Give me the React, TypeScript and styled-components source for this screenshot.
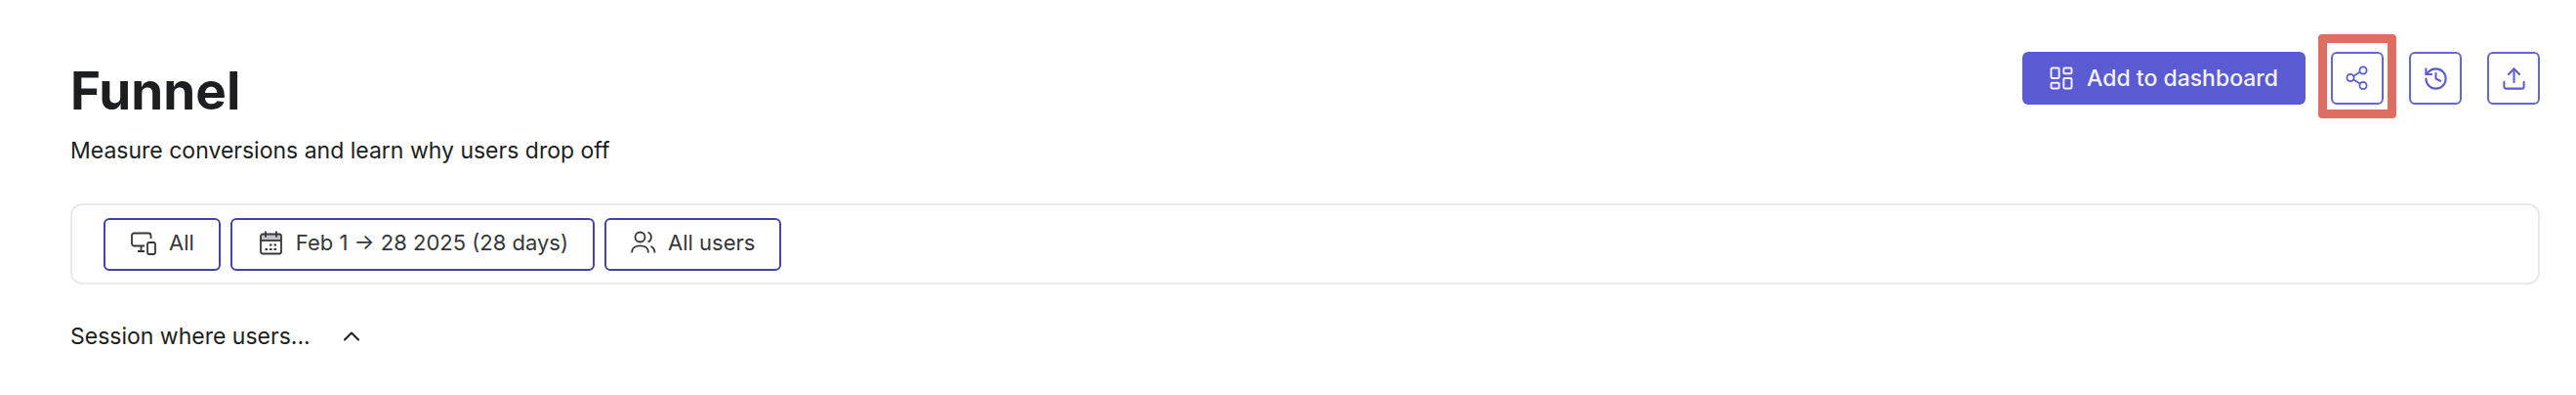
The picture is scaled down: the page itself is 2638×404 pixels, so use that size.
import React from "react";
import styled, { createGlobalStyle } from "styled-components";
import { ChevronUp, History, LayoutDashboard, Upload } from "lucide-react";

const Global = createGlobalStyle`
  *, *::before, *::after { box-sizing: border-box; }
  body {
    margin: 0;
    background: #ffffff;
    color: #1d1e20;
    font-family: Inter, "Liberation Sans", sans-serif;
    font-size: 23px;
    line-height: 32px;
  }
  button { font: inherit; cursor: pointer; white-space: nowrap; }
  svg { display: block; flex: none; }
`;

const Page = styled.main`
  padding: 53px 37px 44px 72px;
`;

const Header = styled.header`
  display: flex;
  align-items: flex-start;
  justify-content: space-between;
  gap: 32px;
`;

const Heading = styled.div`
  padding-top: 7px;
`;

const Title = styled.h1`
  margin: 0;
  font-size: 53px;
  line-height: 66px;
  font-weight: 700;
`;

const Subtitle = styled.p`
  margin: 12px 0 0;
`;

const Actions = styled.div`
  display: flex;
  align-items: center;
  gap: 26px;
`;

const PrimaryButton = styled.button`
  display: flex;
  align-items: center;
  gap: 12px;
  height: 54px;
  padding: 0 28px 0 26px;
  border: 0;
  border-radius: 6px;
  background: #5a5ad2;
  color: #f3f3fc;
  font-weight: 500;
`;

const IconButton = styled.button`
  display: grid;
  place-items: center;
  width: 54px;
  height: 54px;
  padding: 0;
  border: 2px solid #6666d5;
  border-radius: 6px;
  background: #ffffff;
  color: #5a5ad2;
`;

const Highlighted = styled.div`
  position: relative;

  &::after {
    content: "";
    position: absolute;
    inset: -18px -13px -14px;
    border: 9px solid #de6e62;
    border-radius: 4px;
    pointer-events: none;
  }
`;

const FilterBar = styled.section`
  display: flex;
  gap: 10px;
  margin-top: 38px;
  padding: 13px 32px 12px;
  border: 2px solid #e9eaea;
  border-radius: 12px;
`;

const FilterButton = styled.button`
  display: flex;
  align-items: center;
  gap: 12px;
  height: 54px;
  padding: 0 25px 4px;
  border: 2px solid #4343a9;
  border-radius: 6px;
  background: #ffffff;
  color: #36373a;
  font-size: 22px;

  svg { margin-top: 2px; }
`;

const SectionToggle = styled.button`
  display: flex;
  align-items: center;
  gap: 28px;
  margin-top: 37px;
  padding: 0;
  border: 0;
  background: none;
  color: inherit;
`;

const Glyph = styled.svg.attrs({ fill: "none", stroke: "currentColor", "aria-hidden": true })`
  stroke-width: 1.8px;
  stroke-linejoin: round;
`;

const DevicesIcon = () => (
  <Glyph width="28" height="26" viewBox="0 0 28 26">
    <path d="M21.500 8V5a2.500 2.500 0 0 0-2.500-2.500H4.500A2.500 2.500 0 0 0 2 5v8a2.500 2.500 0 0 0 2.500 2.500H15" />
    <path d="M11.500 15.500v5M8 21h7" />
    <rect x="18" y="12" width="8" height="12" rx="2" />
  </Glyph>
);

const CalendarIcon = () => (
  <Glyph width="28" height="26" viewBox="0 0 28 26">
    <path d="M4 6a2 2 0 0 1 2-2h17a2 2 0 0 1 2 2v4H4z" fill="currentColor" fillOpacity="0.3" stroke="none" />
    <rect x="4" y="3.500" width="21" height="20" rx="2" />
    <path d="M4 10h21" />
    <path d="M9 .500v6M20 .500v6" />
    <path d="M13 14.500h2.500M17.500 14.500H20M8.500 19H11M13 19h2.500M17.500 19H20" />
  </Glyph>
);

const UsersIcon = () => (
  <Glyph width="26" height="26" viewBox="0 0 26 26">
    <circle cx="9.500" cy="6.500" r="5" />
    <path d="M1.200 22.500v-1c0-4 3.600-6.200 8.300-6.200s8.300 2.200 8.300 6.200v1" />
    <path d="M17.500 1.500c4.500 1.700 4.500 8.300 0 10M20.500 15.800c2.600 1.200 4 3.400 4 6.700" />
  </Glyph>
);

const ShareIcon = () => (
  <Glyph width="26" height="26" viewBox="0 0 26 26">
    <circle cx="6" cy="12.500" r="3.600" />
    <circle cx="19" cy="5" r="3.600" />
    <circle cx="19" cy="20.500" r="3.600" />
    <path d="M9.200 10.700l6.600-3.900M9.200 14.400l6.600 4.200" />
  </Glyph>
);

export default function App() {
  return (
    <>
      <Global />
      <Page>
        <Header>
          <Heading>
            <Title>Funnel</Title>
            <Subtitle>Measure conversions and learn why users drop off</Subtitle>
          </Heading>
          <Actions>
            <PrimaryButton type="button">
              <LayoutDashboard size={28} strokeWidth={1.7} />
              Add to dashboard
            </PrimaryButton>
            <Highlighted>
              <IconButton type="button" aria-label="Share">
                <ShareIcon />
              </IconButton>
            </Highlighted>
            <IconButton type="button" aria-label="History">
              <History size={27} strokeWidth={1.8} />
            </IconButton>
            <IconButton type="button" aria-label="Export">
              <Upload size={27} strokeWidth={1.8} />
            </IconButton>
          </Actions>
        </Header>

        <FilterBar aria-label="Filters">
          <FilterButton type="button">
            <DevicesIcon />
            All
          </FilterButton>
          <FilterButton type="button">
            <CalendarIcon />
            Feb 1 → 28 2025 (28 days)
          </FilterButton>
          <FilterButton type="button">
            <UsersIcon />
            All users
          </FilterButton>
        </FilterBar>

        <SectionToggle type="button" aria-expanded="true">
          Session where users...
          <ChevronUp size={28} strokeWidth={1.8} />
        </SectionToggle>
      </Page>
    </>
  );
}
